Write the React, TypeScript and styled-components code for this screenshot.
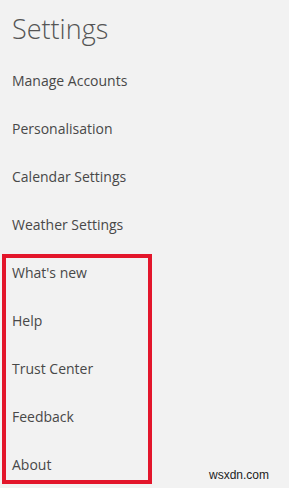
import React from "react";
import styled, { createGlobalStyle } from "styled-components";

const GlobalStyle = createGlobalStyle`
  html, body {
    margin: 0;
    padding: 0;
    background: #f2f2f2;
  }
  body {
    font-family: "Open Sans", "Noto Sans", "Liberation Sans", sans-serif;
  }
`;

const Panel = styled.div`
  position: relative;
  width: 289px;
  height: 488px;
  overflow: hidden;
  background: #f2f2f2;
  display: flex;
  flex-direction: column;
`;

const Title = styled.h1`
  margin: 0;
  height: 56px;
  padding-left: 12px;
  display: flex;
  align-items: center;
  font-family: "Open Sans", "Noto Sans", sans-serif;
  font-weight: 300;
  font-size: 27px;
  color: #555;
`;

const Item = styled.div`
  height: 48px;
  padding-left: 12px;
  display: flex;
  align-items: center;
  font-size: 14px;
  color: #484848;
`;

const Highlight = styled.div`
  position: relative;
  display: flex;
  flex-direction: column;

  &::after {
    content: "";
    position: absolute;
    left: 2px;
    top: 6px;
    width: 142px;
    height: 222px;
    border: 4px solid #e3162b;
    pointer-events: none;
  }
`;

const Watermark = styled.div`
  position: absolute;
  right: 20px;
  bottom: 6px;
  font-family: "Liberation Sans", Arial, sans-serif;
  font-size: 12px;
  color: #222;
`;

const topItems = [
  "Manage Accounts",
  "Personalisation",
  "Calendar Settings",
  "Weather Settings",
];

const boxedItems = ["What's new", "Help", "Trust Center", "Feedback", "About"];

export default function App() {
  return (
    <>
      <GlobalStyle />
      <Panel>
        <Title>Settings</Title>
        {topItems.map((label) => (
          <Item key={label}>{label}</Item>
        ))}
        <Highlight>
          {boxedItems.map((label) => (
            <Item key={label}>{label}</Item>
          ))}
        </Highlight>
        <Watermark>wsxdn.com</Watermark>
      </Panel>
    </>
  );
}
